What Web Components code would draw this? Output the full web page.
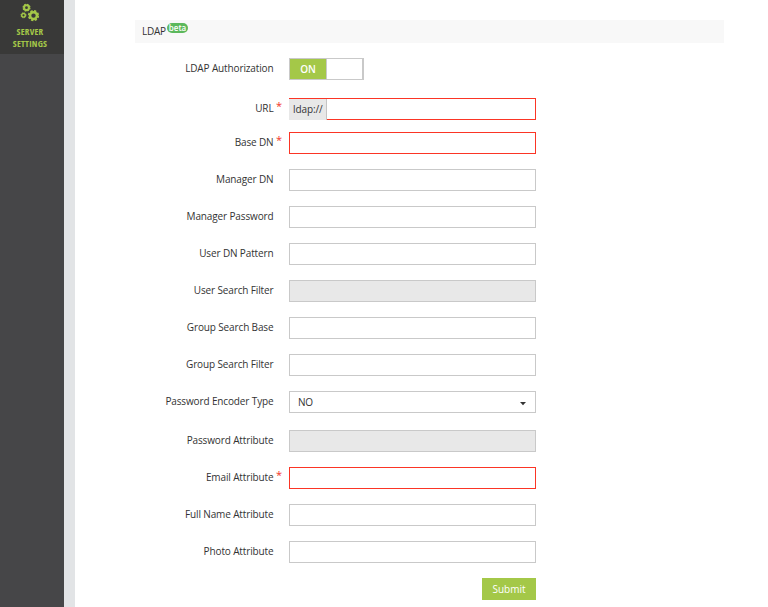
<!DOCTYPE html>
<html lang="en"><head><meta charset="utf-8"><title>Server settings</title>
<style>html,body{margin:0;height:100%;background:#fff;overflow:hidden}body{font:10px "Open Sans",sans-serif;color:#333}</style></head>
<body>
<settings-page>
<side-nav slot="nav"><span>SERVER</span><span>SETTINGS</span></side-nav>
<section-title badge="beta">LDAP</section-title>
<form-row label="LDAP Authorization" style="--gap:18px"><toggle-switch>ON</toggle-switch></form-row>
<form-row label="URL" required style="--gap:12px"><text-field invalid prefix="ldap://"></text-field></form-row>
<form-row label="Base DN" required><text-field invalid></text-field></form-row>
<form-row label="Manager DN"><text-field></text-field></form-row>
<form-row label="Manager Password"><text-field></text-field></form-row>
<form-row label="User DN Pattern"><text-field></text-field></form-row>
<form-row label="User Search Filter"><text-field disabled></text-field></form-row>
<form-row label="Group Search Base"><text-field></text-field></form-row>
<form-row label="Group Search Filter"><text-field></text-field></form-row>
<form-row label="Password Encoder Type" style="--gap:17px"><select-field>NO</select-field></form-row>
<form-row label="Password Attribute"><text-field disabled></text-field></form-row>
<form-row label="Email Attribute" required><text-field invalid></text-field></form-row>
<form-row label="Full Name Attribute"><text-field></text-field></form-row>
<form-row label="Photo Attribute"><text-field></text-field></form-row>
<form-row label=""><submit-button>Submit</submit-button></form-row>
</settings-page>
<script>
function define(name, html, init) {
  customElements.define(name, class extends HTMLElement {
    connectedCallback() {
      if (this.shadowRoot) return;
      this.attachShadow({mode:'open'}).innerHTML = html;
      if (init) init(this, this.shadowRoot);
    }
  });
}
define('settings-page', `<style>:host{display:flex;height:100vh}
main{flex:1;padding:20px 0 0 60px;display:flex;flex-direction:column;min-width:0}</style>
<slot name="nav"></slot><main><slot></slot></main>`);
define('side-nav', `<style>:host{display:block;box-sizing:border-box;width:75px;flex:none;background:#464648;border-right:11px solid #e2e4e6}
.item{box-sizing:border-box;height:54px;background:#393938;display:flex;flex-direction:column;align-items:center;padding:3px 4px 0 0;color:#a4c848}
svg{width:20px;height:19px;flex:none}
.text{display:flex;flex-direction:column;align-items:center;margin-top:4px;font-size:9px;font-weight:700;font-stretch:75%;line-height:12px;letter-spacing:.25px}</style>
<div class="item"><svg viewBox="0 0 20 19"><g fill="none" stroke="#a4c848">
<circle cx="6.5" cy="4.7" r="2.4" stroke-width="2"/><circle cx="6.5" cy="4.7" r="3.4" stroke-width="1.3" stroke-dasharray="1.6 1.07"/>
<circle cx="3.5" cy="12.3" r="1.8" stroke-width="1.4"/><circle cx="3.5" cy="12.3" r="2.5" stroke-width="1" stroke-dasharray="1.2 .763"/>
<circle cx="13.5" cy="12.6" r="3.4" stroke-width="2.4"/><circle cx="13.5" cy="12.6" r="4.8" stroke-width="1.7" stroke-dasharray="2.3 1.47"/></g></svg>
<div class="text"><slot></slot></div></div>`);
define('section-title', `<style>:host{display:flex;align-items:flex-start;box-sizing:border-box;width:589px;height:23px;flex:none;background:#f8f8f8;padding-left:7px;line-height:22px;margin-bottom:15px;letter-spacing:-.25px}
b{font-weight:600;font-size:8px;line-height:10px;height:10px;background:#5cb85c;color:#fff;border-radius:5px;padding:0 2px;margin:3px 0 0 1px;letter-spacing:0}</style><slot></slot><b></b>`,
(h,r)=>r.querySelector('b').textContent=h.getAttribute('badge'));
define('form-row', `<style>:host{display:flex;height:22px;flex:none;margin-bottom:var(--gap,15px)}
.label{width:138.5px;text-align:right;line-height:21px;white-space:nowrap;letter-spacing:-.13px}
.mark{width:15.5px;flex:none;color:#f23427;line-height:15px;font-size:11px;padding-left:2.5px;box-sizing:border-box}</style>
<span class="label"></span><span class="mark"></span><slot></slot>`,
(h,r)=>{r.querySelector('.label').textContent=h.getAttribute('label');if(h.hasAttribute('required'))r.querySelector('.mark').textContent='*';});
define('text-field', `<style>:host{display:flex;box-sizing:border-box;width:247px;height:22px;border:1px solid #c9c9c9;background:#fff}
:host([disabled]){background:#e8e8e8}:host([invalid]){border-color:#fb3525}
:host([prefix]){border-left:0}
span{display:none}:host([prefix]) span{display:block;box-sizing:border-box;width:38px;height:21px;background:#e8e8e8;border-right:1px solid #c4c4c4;padding-left:4px;line-height:21px;letter-spacing:-.1px}</style><span></span>`,
(h,r)=>r.querySelector('span').textContent=h.getAttribute('prefix')||'');
define('toggle-switch', `<style>:host{display:flex;box-sizing:border-box;width:75px;height:22px;border:1px solid #c9c9c9;border-right-width:2px}
span{width:36px;text-align:center;background:#a4c848;color:#fff;font-weight:600;line-height:20px;border-right:1px solid #c9c9c9}</style><span><slot></slot></span>`);
define('select-field', `<style>:host{display:flex;justify-content:space-between;align-items:center;box-sizing:border-box;width:247px;height:22px;border:1px solid #c9c9c9;padding:0 9px 0 8px;letter-spacing:-.2px}
svg{width:6px;height:4px;margin-top:3px}</style><slot></slot><svg viewBox="0 0 6 4"><path d="M0 0h6L3 3.3z" fill="#333"/></svg>`);
define('submit-button', `<style>:host{display:block;width:54px;height:22px;margin-left:193px;background:#a4c848;color:#fff;text-align:center;line-height:23px;font-weight:500}</style><slot></slot>`);
</script></body></html>
